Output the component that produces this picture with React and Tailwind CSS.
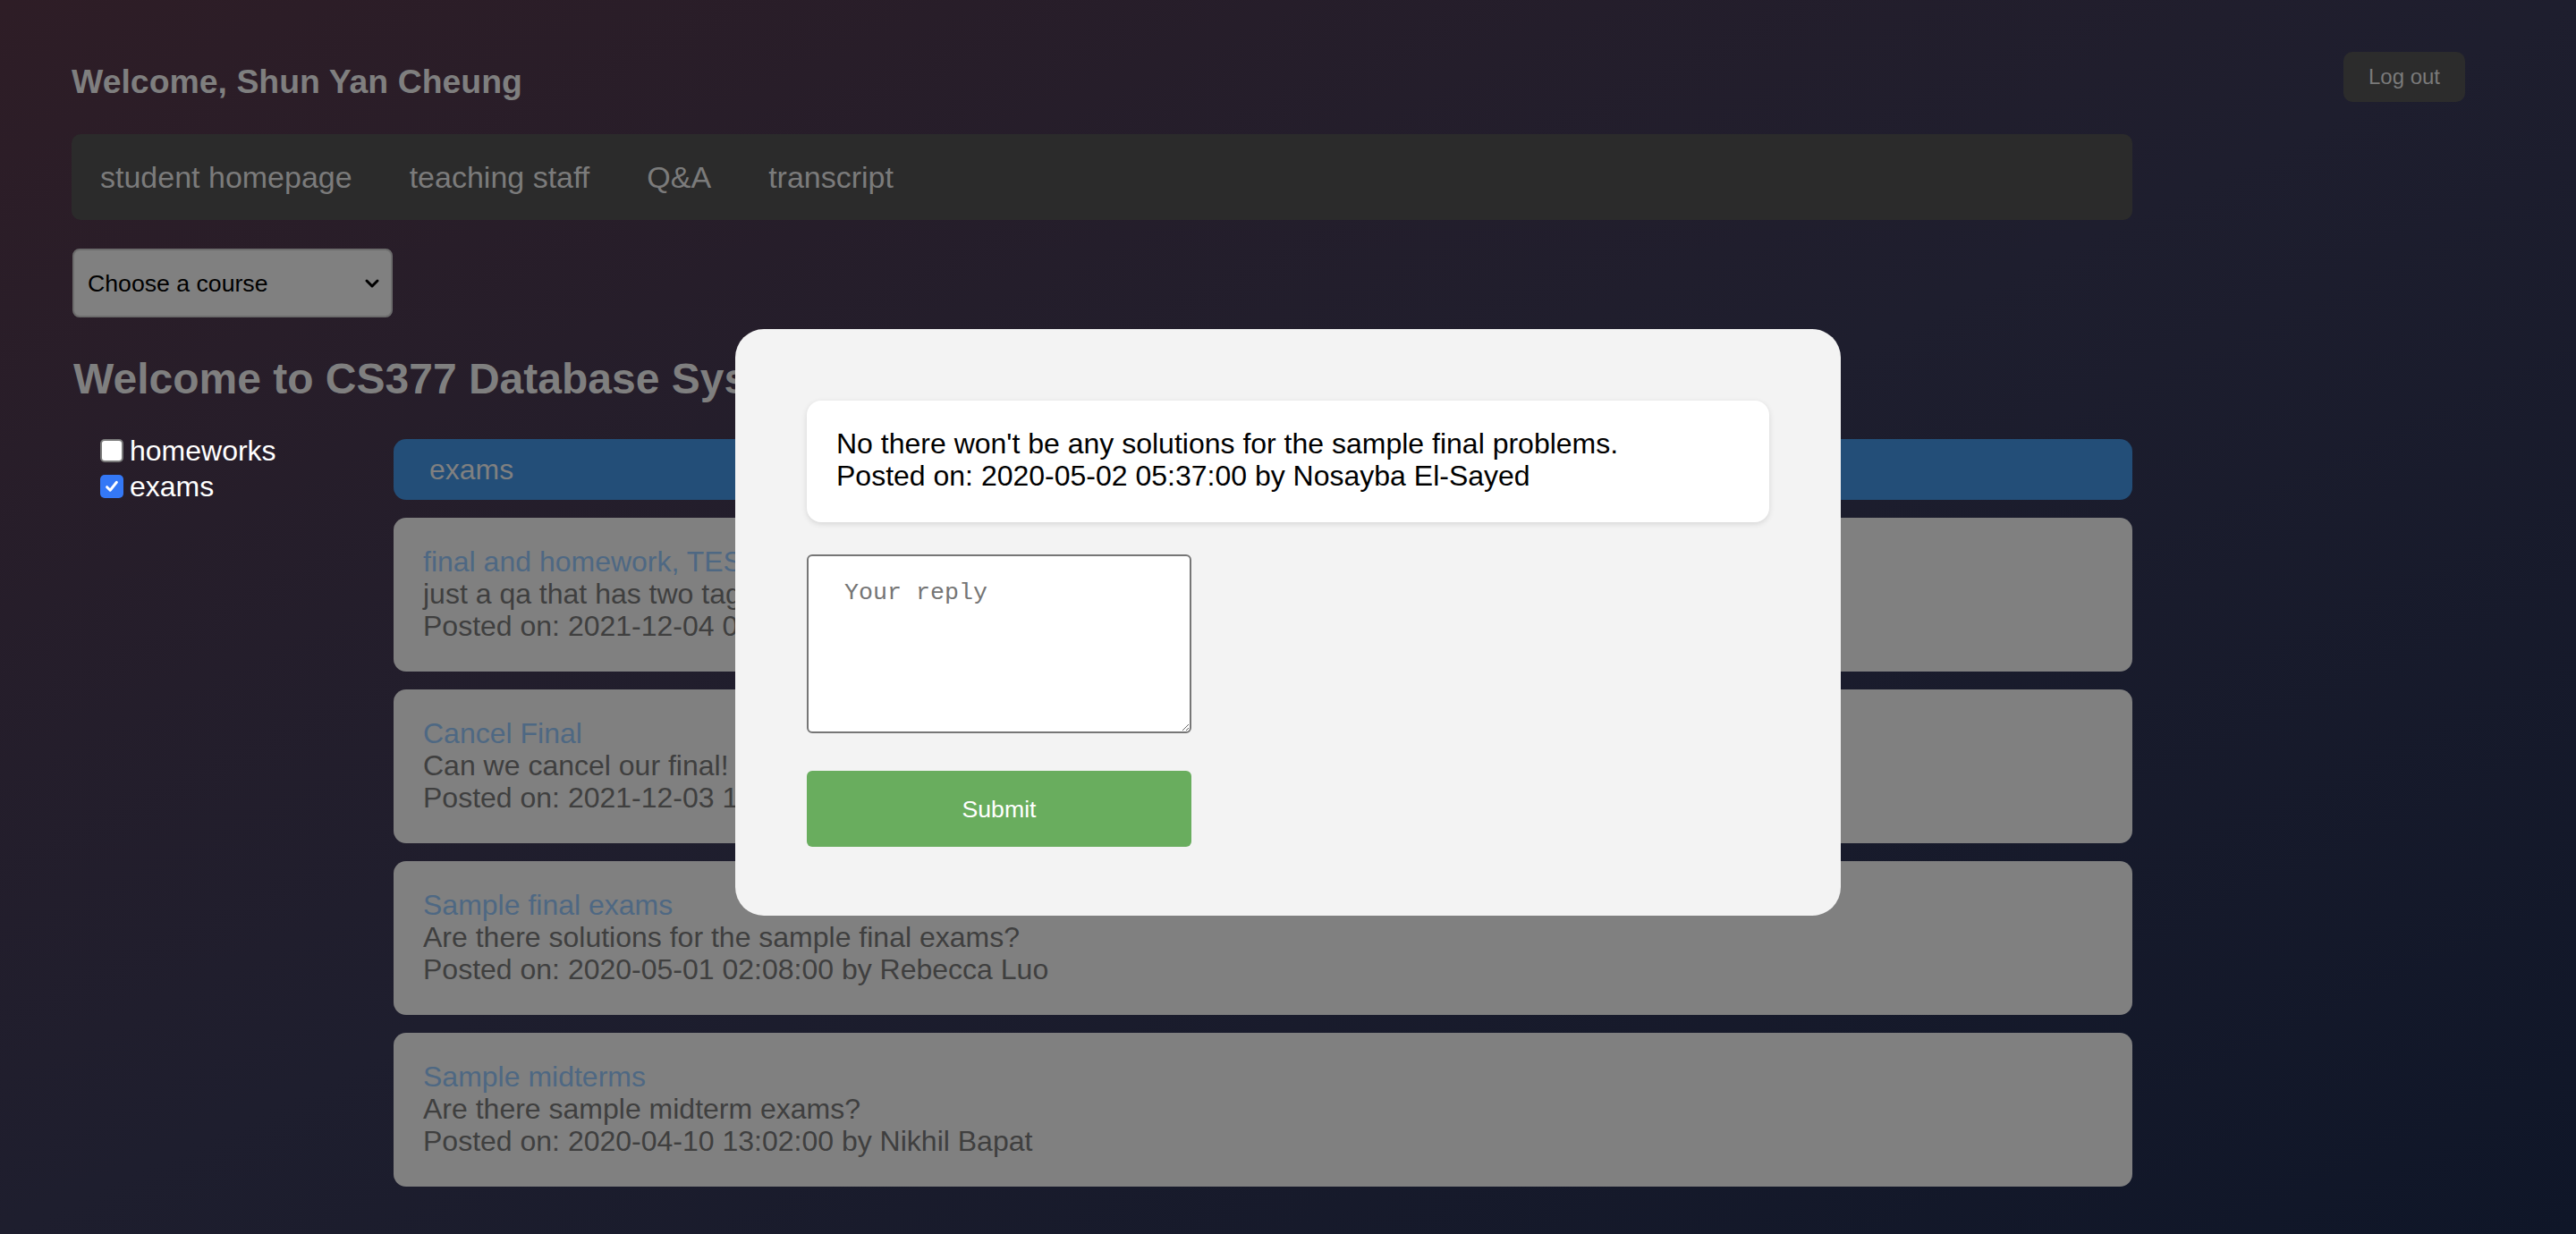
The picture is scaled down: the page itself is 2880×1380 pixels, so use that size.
import React from "react";

const cards = [
  {
    title: "final and homework, TEST",
    body: "just a qa that has two tags",
    meta: "Posted on: 2021-12-04 01:12:00 by Shun Yan Cheung",
  },
  {
    title: "Cancel Final",
    body: "Can we cancel our final!",
    meta: "Posted on: 2021-12-03 15:40:00 by Shun Yan Cheung",
  },
  {
    title: "Sample final exams",
    body: "Are there solutions for the sample final exams?",
    meta: "Posted on: 2020-05-01 02:08:00 by Rebecca Luo",
  },
  {
    title: "Sample midterms",
    body: "Are there sample midterm exams?",
    meta: "Posted on: 2020-04-10 13:02:00 by Nikhil Bapat",
  },
];

function Check({ checked }) {
  if (checked) {
    return (
      <span className="w-[26px] h-[26px] rounded-[5px] bg-[#3478f6] flex items-center justify-center shrink-0">
        <svg width="18" height="18" viewBox="0 0 16 16" fill="none">
          <path d="M3.2 8.6 L6.4 11.8 L12.8 3.8" stroke="white" strokeWidth="2.6" strokeLinecap="round" strokeLinejoin="round" />
        </svg>
      </span>
    );
  }
  return <span className="w-[26px] h-[26px] rounded-[5px] bg-white border-2 border-[#7a7a7a] shrink-0" />;
}

export default function App() {
  return (
    <div
      className="relative w-full h-[1380px] overflow-hidden bg-[linear-gradient(to_bottom_right,#2e1d26_0%,#1e1e2e_50%,#0f1628_100%)]"
      style={{ fontFamily: '"Liberation Sans", Arial, sans-serif' }}
    >
      {/* header */}
      <div className="flex items-start justify-between pl-[80px] pr-[124px] pt-[58px]">
        <h3 className="mt-[12px] text-[37.44px] leading-[42px] font-bold text-[#7f7f7f]">Welcome, Shun Yan Cheung</h3>
        <button className="w-[136px] h-[56px] rounded-[10px] bg-[#2c2c2c] text-[24px] text-[#7a7a7a]">Log out</button>
      </div>

      {/* nav */}
      <nav className="ml-[80px] mt-[36px] w-[2304px] h-[96px] rounded-[10px] bg-[#2b2b2b] flex items-center">
        {["student homepage", "teaching staff", "Q&A", "transcript"].map((t) => (
          <span key={t} className="px-[32px] text-[34px] text-[#7b7b7b] leading-none">
            {t}
          </span>
        ))}
      </nav>

      {/* select */}
      <div className="ml-[81px] mt-[32px] w-[358px] h-[77px] rounded-[8px] bg-[#808080] border-2 border-[#6c6c6c] flex items-center justify-between pl-[15px] pr-[12px]">
        <span className="text-[26.67px] text-black">Choose a course</span>
        <svg width="18" height="14" viewBox="0 0 18 14" fill="none">
          <path d="M3 4 L9 10 L15 4" stroke="black" strokeWidth="3" strokeLinecap="round" strokeLinejoin="round" />
        </svg>
      </div>

      <h2 className="ml-[82px] mt-[42px] text-[48px] leading-[54px] font-bold text-[#7f7f7f]">
        Welcome to CS377 Database Systems
      </h2>

      {/* main */}
      <div className="mt-[31px] ml-[80px] flex items-start">
        <div className="w-[360px] pl-[32px] pt-[2px] flex flex-col">
          <label className="h-[40px] flex items-center gap-[7px] text-[32px] text-white">
            <Check checked={false} />
            <span>homeworks</span>
          </label>
          <label className="h-[40px] flex items-center gap-[7px] text-[32px] text-white">
            <Check checked={true} />
            <span>exams</span>
          </label>
        </div>
        <div className="w-[1944px] pt-[9px] flex flex-col gap-[20px]">
          <div className="h-[68px] rounded-[14px] bg-[#234e78] flex items-center pl-[40px] text-[32px] text-[#808080]">
            exams
          </div>
          {cards.map((c) => (
            <div key={c.title} className="h-[172px] rounded-[14px] bg-[#808080] pl-[33px] pt-[31px] text-[32px] leading-[36px]">
              <div className="text-[#4e6883]">{c.title}</div>
              <div className="text-[#3f3f3f]">{c.body}</div>
              <div className="text-[#3f3f3f]">{c.meta}</div>
            </div>
          ))}
        </div>
      </div>

      {/* modal */}
      <div className="absolute inset-0 flex justify-center pt-[368px]">
        <div className="w-[1236px] h-[656px] rounded-[32px] bg-[#f3f3f3] pt-[80px] px-[80px]">
          <div className="h-[136px] rounded-[16px] bg-white shadow-[0_2px_6px_rgba(0,0,0,0.12)] pl-[33px] pt-[30px] text-[32px] leading-[36px] text-black">
            <div>No there won't be any solutions for the sample final problems.</div>
            <div>Posted on: 2020-05-02 05:37:00 by Nosayba El-Sayed</div>
          </div>
          <textarea
            placeholder="Your reply"
            className="block mt-[36px] w-[430px] h-[200px] rounded-[6px] border-2 border-[#767676] bg-white px-[40px] pt-[26px] pb-[20px] text-[26.67px] leading-[30px] text-black placeholder:text-[#757575] outline-none"
            style={{ fontFamily: '"Liberation Mono", "Courier New", monospace' }}
          />
          <button className="block mt-[42px] w-[430px] h-[85px] rounded-[6px] bg-[#69ad5e] text-white text-[26.67px]">
            Submit
          </button>
        </div>
      </div>
    </div>
  );
}
